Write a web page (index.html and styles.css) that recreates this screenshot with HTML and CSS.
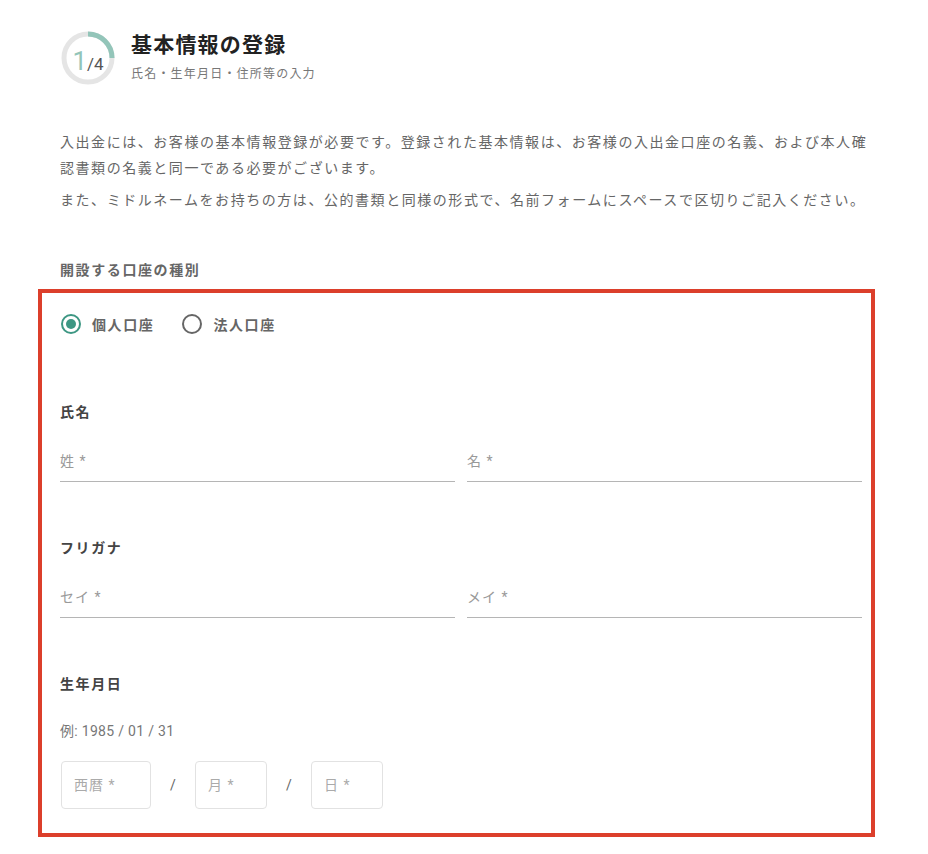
FILE: index.html
```html
<!DOCTYPE html>
<html lang="ja">
	<head>
		<title>基本情報の登録</title>
		<meta charset="utf-8" />
		<link rel="stylesheet" href="styles.css">
	</head>
	<body>
		<div class="page">
			<div class="head">
				<div class="step">
					<svg width="54" height="54" viewBox="0 0 54 54">
						<circle cx="27" cy="27" r="24" fill="none" stroke="#e5e5e5" stroke-width="5" />
						<path d="M27 3 A24 24 0 0 1 51 27" fill="none" stroke="#93c5b9" stroke-width="5" />
					</svg>
					<span class="step-num"><b>1</b>/4</span>
				</div>
				<div class="head-text">
					<div class="title">基本情報の登録</div>
					<div class="sub">氏名・生年月日・住所等の入力</div>
				</div>
			</div>

			<p class="intro">入出金には、お客様の基本情報登録が必要です。登録された基本情報は、お客様の入出金口座の名義、および本人確認書類の名義と同一である必要がございます。</p>
			<p class="intro intro2">また、ミドルネームをお持ちの方は、公的書類と同様の形式で、名前フォームにスペースで区切りご記入ください。</p>

			<div class="label top-label">開設する口座の種別</div>

			<div class="box">
				<div class="radios">
					<label class="radio"><span class="dot on"></span>個人口座</label>
					<label class="radio"><span class="dot"></span>法人口座</label>
				</div>

				<div class="label name-label">氏名</div>
				<div class="pair">
					<div class="line-input">姓 *</div>
					<div class="line-input">名 *</div>
				</div>

				<div class="label sec-label">フリガナ</div>
				<div class="pair">
					<div class="line-input">セイ *</div>
					<div class="line-input">メイ *</div>
				</div>

				<div class="label sec-label">生年月日</div>
				<div class="example">例: 1985 / 01 / 31</div>
				<div class="dates">
					<div class="date-box year">西暦 *</div>
					<span class="slash">/</span>
					<div class="date-box">月 *</div>
					<span class="slash">/</span>
					<div class="date-box">日 *</div>
				</div>
			</div>
		</div>
	</body>
</html>
```

FILE: styles.css
```css
body {margin: 0; background: #fff; color: #333; font-family: Roboto, "Noto Sans CJK JP", sans-serif; font-size: 14px;}
.page {width: 837px; margin-left: 38px; padding-top: 31px;}

.head {display: flex; align-items: center; margin-left: 23px;}
.step {position: relative; width: 54px; height: 54px;}
.step svg {display: block;}
.step-num {position: absolute; left: 0; top: 0; width: 54px; line-height: 54px; text-align: center; font-size: 17px; color: #555; padding-top: 3px;}
.step-num b {font-weight: 400; font-size: 26px; color: #93c5b9;}
.head-text {margin-left: 16px;}
.title {font-size: 21px; font-weight: bold; color: #222; line-height: 24px; letter-spacing: 1.2px;}
.sub {font-size: 12px; color: #777; line-height: 18px; margin-top: 8px; letter-spacing: 1.2px;}

.intro {margin: 44px 0 0; padding-left: 22px; color: #666; line-height: 26px; letter-spacing: 1.55px;}
.intro2 {margin-top: 6px;}

.label {font-weight: bold; color: #555; line-height: 20px; letter-spacing: 1.6px;}
.top-label {padding-left: 22px; margin-top: 47px; color: #666;}

.box {border: 4px solid #dc3f2b; margin-top: 9px; padding: 21px 9px 24px 18px;}

.radios {display: flex; height: 20px; align-items: center;}
.radio {display: flex; align-items: center; font-weight: bold; color: #666; letter-spacing: 1.6px; margin-right: 27px;}
.dot {width: 16px; height: 16px; border: 2px solid #666; border-radius: 50%; margin: 0 11px 0 1px; position: relative;}
.dot.on {border-color: #3d9783;}
.dot.on::after {content: ""; position: absolute; left: 3px; top: 3px; width: 10px; height: 10px; border-radius: 50%; background: #3d9783;}

.name-label {margin-top: 68px; color: #444;}
.sec-label {margin-top: 56px; color: #444;}

.pair {display: flex; gap: 12px; margin-top: 20px;}
.line-input {flex: 1; height: 39px; line-height: 39px; border-bottom: 1px solid #b5b5b5; color: #999; letter-spacing: 1px;}

.example {margin-top: 27px; color: #777; line-height: 20px; letter-spacing: 0.3px;}
.dates {display: flex; align-items: center; margin-top: 20px; margin-left: 1px;}
.date-box {width: 72px; height: 48px; box-sizing: border-box; border: 1px solid #e2e2e2; border-radius: 4px; line-height: 46px; padding-left: 12px; color: #aaa; letter-spacing: 1px;}
.date-box.year {width: 90px;}
.slash {width: 44px; text-align: center; color: #666;}
```
